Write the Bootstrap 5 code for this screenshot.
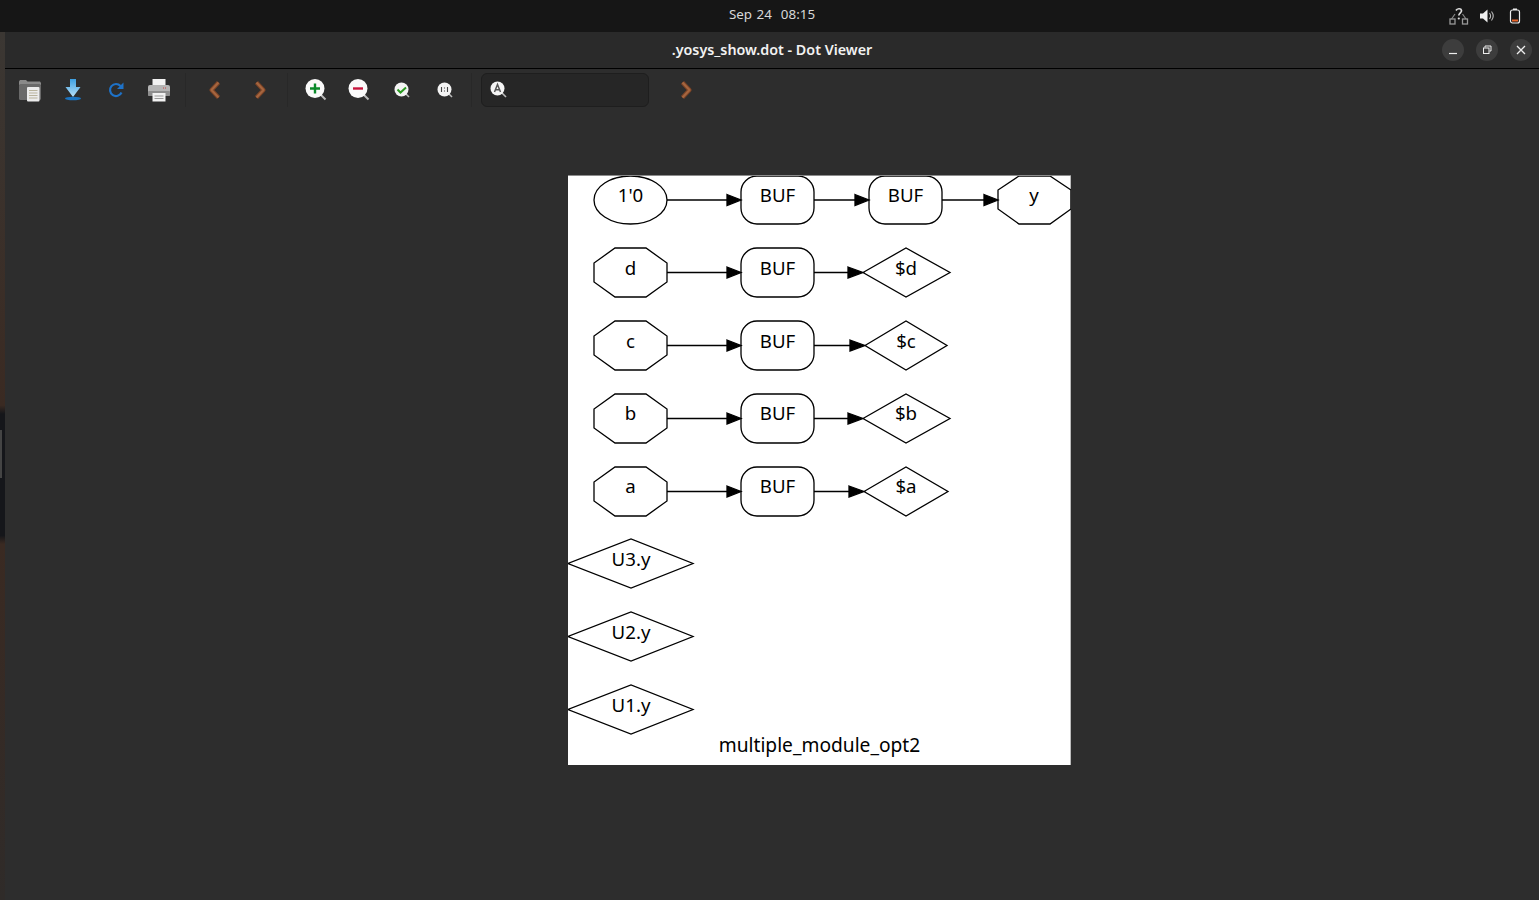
<!DOCTYPE html>
<html lang="en">

<head>
    <meta charset="UTF-8">
    <meta name="viewport" content="width=device-width, initial-scale=1.0">
    <title>.yosys_show.dot - Dot Viewer</title>
    <link href="https://cdn.jsdelivr.net/npm/bootstrap@5.3.0/dist/css/bootstrap.min.css" rel="stylesheet">
    <style>
        html, body {
            height: 100%;
            overflow: hidden;
        }

        body {
            background: #2d2d2d;
            font-family: "Noto Sans", sans-serif;
        }

        .top-strip {
            height: 32px;
            background: #161616;
            color: #d8d8d8;
            font-size: 13.4px;
        }

        .clock {
            margin-left: 5px;
            margin-top: -3px;
            word-spacing: 1px;
        }

        .tray {
            right: 18px;
            top: 0;
            height: 32px;
        }

        .tray-net {
            margin-right: 10px;
        }

        .tray-vol {
            margin-right: 14px;
        }

        .desk-edge {
            width: 5px;
            background:
                linear-gradient(#444, #444) 0 398px / 2px 48px no-repeat,
                linear-gradient(#3b3733 0, #3a2a22 43%, #15161a 44%, #15161a 58%, #3a2a22 59%, #2f2b29 100%);
        }

        .title-strip {
            height: 37px;
            background: #2a2a2a;
            border-bottom: 1px solid #000;
            color: #f2f2f2;
            font-size: 14.3px;
            font-weight: 600;
        }

        .win-btns {
            right: 7px;
            top: 7px;
            gap: 12px;
        }

        .win-btn {
            width: 22px;
            height: 22px;
            border-radius: 50%;
            background: #3d3d3d;
        }

        .tools {
            height: 41px;
            padding-left: 3px;
        }

        .tool {
            width: 43px;
            height: 41px;
        }

        .tool-wide {
            width: 45px;
        }

        .tool-sep {
            width: 1px;
            height: 34px;
            margin: 0 6px 0 5px;
            background: #282828;
        }

        .tool-sep-last {
            margin-right: 8px;
        }

        .finder {
            width: 168px;
            height: 34px;
            background: #262626;
            border: 1px solid #1e1e1e;
            border-radius: 6px;
            padding-left: 8px;
            margin-left: 1px;
        }

        .finder-next {
            margin-left: 15px;
        }

        .canvas-area {
            padding-top: 66px;
            padding-left: 563px;
        }

        .graph {
            display: block;
            background: #fff;
            box-shadow: inset -1px 0 0 #bbb, 0 -1px 0 #8c8c8c;
            font-family: "Noto Sans", sans-serif;
            font-size: 18.67px;
        }

        .graph text {
            text-anchor: middle;
            fill: #000;
        }

        .graph .graph-label {
            font-size: 19.2px;
        }

        .graph polygon {
            stroke: #000;
            stroke-width: 1.3;
        }

        .graph .node {
            fill: none;
            stroke: #000;
            stroke-width: 1.3;
        }

        .graph .edge {
            stroke: #000;
            stroke-width: 1.3;
        }
    </style>
</head>

<body class="d-flex flex-column">
    <div class="top-strip position-relative d-flex align-items-center justify-content-center flex-shrink-0">
        <span class="clock">Sep 24&nbsp; 08:15</span>
        <div class="tray position-absolute d-flex align-items-center">
            <svg width="20" height="18" viewBox="0 0 20 18" class="tray-net">
                <path d="M7 3.500c1-2 5-2.600 5.500 0 .4 2-2.700 2.500-2.700 5" fill="none" stroke="#ddd" stroke-width="1.700"/>
                <circle cx="9.800" cy="11.500" r="1.100" fill="#ddd"/>
                <path d="M6 7 2.500 12M13.500 7 17 12" stroke="#888" stroke-width="1.200"/>
                <rect x="1" y="12" width="5" height="5" fill="none" stroke="#999" stroke-width="1.300"/>
                <rect x="13.500" y="12" width="5" height="5" fill="none" stroke="#999" stroke-width="1.300"/>
            </svg>
            <svg width="16" height="16" viewBox="0 0 16 16" class="tray-vol">
                <path d="M1 5.500h3L8.500 1.500v13L4 10.500H1z" fill="#eee"/>
                <path d="M10.500 5c1.300 1.800 1.300 4.200 0 6M12.500 3.500c2 2.600 2 6.400 0 9" fill="none" stroke="#bbb" stroke-width="1.100"/>
            </svg>
            <svg width="12" height="16" viewBox="0 0 12 16">
                <rect x="1.500" y="2" width="9" height="13" rx="2" fill="none" stroke="#eee" stroke-width="1.200"/>
                <rect x="4" y=".5" width="4" height="1.500" fill="#eee"/>
                <rect x="3" y="11.500" width="6" height="2" fill="#e8642a"/>
            </svg>
        </div>
    </div>

    <div class="d-flex flex-grow-1">
        <div class="desk-edge flex-shrink-0"></div>

        <div class="flex-grow-1 d-flex flex-column">
            <div class="title-strip position-relative d-flex align-items-center justify-content-center flex-shrink-0">
                <span>.yosys_show.dot - Dot Viewer</span>
                <div class="win-btns position-absolute d-flex">
                    <div class="win-btn d-flex align-items-center justify-content-center">
                        <svg width="10" height="10" viewBox="0 0 10 10"><path d="M1 8.500h8" stroke="#eee" stroke-width="1.200"/></svg>
                    </div>
                    <div class="win-btn d-flex align-items-center justify-content-center">
                        <svg width="10" height="10" viewBox="0 0 10 10"><path d="M3 2.500V1h6v5H7.500" fill="none" stroke="#eee"/><rect x="1.500" y="3" width="5.500" height="5.500" fill="none" stroke="#eee"/></svg>
                    </div>
                    <div class="win-btn d-flex align-items-center justify-content-center">
                        <svg width="10" height="10" viewBox="0 0 10 10"><path d="M1 1l8 8M9 1l-8 8" stroke="#eee" stroke-width="1.300"/></svg>
                    </div>
                </div>
            </div>

            <div class="tools d-flex align-items-center flex-shrink-0">
                <!-- open -->
                <div class="tool d-flex align-items-center justify-content-center">
                    <svg width="24" height="24" viewBox="0 0 24 24">
                        <path d="M1 3.500 2 2h6l1.500 1.500H22l1 1.500v2H1z" fill="#8a8a8a"/>
                        <rect x="1" y="6" width="22" height="16" rx="1.500" fill="#6a6a6a"/>
                        <rect x="9" y="9" width="12.500" height="14.500" rx="1" fill="#ececec"/>
                        <path d="M11 12.500h8.500M11 15h8.500M11 17.500h8.500M11 20h8.500" stroke="#b9b39c"/>
                    </svg>
                </div>
                <!-- save -->
                <div class="tool d-flex align-items-center justify-content-center">
                    <svg width="18" height="24" viewBox="0 0 18 24">
                        <defs>
                            <linearGradient id="saveFill" x1="0" y1="0" x2="0" y2="1">
                                <stop offset="0" stop-color="#3d9fe0"/>
                                <stop offset="1" stop-color="#b8e0f8"/>
                            </linearGradient>
                        </defs>
                        <path d="M6 1h6v8h4.500L9 19 1.500 9H6z" fill="url(#saveFill)"/>
                        <ellipse cx="9" cy="20.500" rx="8" ry="1.700" fill="#1c74c0"/>
                    </svg>
                </div>
                <!-- reload -->
                <div class="tool d-flex align-items-center justify-content-center">
                    <svg width="18" height="18" viewBox="0 0 18 18">
                        <path d="M13.500 5A6 6 0 1 0 14.500 11.500" fill="none" stroke="#1e72c8" stroke-width="2.200"/>
                        <path d="M16.500 1.500v6.500h-6.500z" fill="#1e72c8"/>
                    </svg>
                </div>
                <!-- print -->
                <div class="tool d-flex align-items-center justify-content-center">
                    <svg width="24" height="24" viewBox="0 0 24 24">
                        <rect x="5.500" y="1" width="13" height="8" fill="#f2f2f2"/>
                        <rect x="1" y="7" width="22" height="11" rx="2" fill="#b5b5b5"/>
                        <rect x="1" y="13" width="22" height="5" rx="1" fill="#8e8e8e"/>
                        <rect x="5.500" y="15" width="13" height="8.500" fill="#f2f2f2"/>
                        <path d="M7.500 18h9M7.500 20.500h9" stroke="#9a9a9a"/>
                        <path d="M16 10h1M18 10h1" stroke="#c44"/>
                    </svg>
                </div>
                <div class="tool-sep"></div>
                <!-- back / forward -->
                <div class="tool tool-wide d-flex align-items-center justify-content-center">
                    <svg width="14" height="20" viewBox="0 0 14 20"><path d="M10.500 2.500 3.500 10l7 7.500" fill="none" stroke="#7a4326" stroke-width="4.200" stroke-linejoin="round"/><path d="M10.500 2.500 3.500 10l7 7.500" fill="none" stroke="#a5653f" stroke-width="2.200" stroke-linejoin="round"/></svg>
                </div>
                <div class="tool tool-wide d-flex align-items-center justify-content-center">
                    <svg width="14" height="20" viewBox="0 0 14 20"><path d="M3.500 2.500l7 7.500-7 7.500" fill="none" stroke="#7a4326" stroke-width="4.200" stroke-linejoin="round"/><path d="M3.500 2.500l7 7.500-7 7.500" fill="none" stroke="#a5653f" stroke-width="2.200" stroke-linejoin="round"/></svg>
                </div>
                <div class="tool-sep"></div>
                <!-- zoom in -->
                <div class="tool d-flex align-items-center justify-content-center">
                    <svg width="22" height="22" viewBox="0 0 22 22">
                        <path d="M15 15l5.500 5.500" stroke="#bbb" stroke-width="2"/>
                        <circle cx="10" cy="9.500" r="9.500" fill="#fafafa"/>
                        <path d="M10 4.500v10M5 9.500h10" stroke="#0a8a2a" stroke-width="2.400"/>
                    </svg>
                </div>
                <!-- zoom out -->
                <div class="tool d-flex align-items-center justify-content-center">
                    <svg width="22" height="22" viewBox="0 0 22 22">
                        <path d="M15 15l5.500 5.500" stroke="#bbb" stroke-width="2"/>
                        <circle cx="10" cy="9.500" r="9.500" fill="#fafafa"/>
                        <path d="M5 9.500h10" stroke="#c8143c" stroke-width="2.400"/>
                    </svg>
                </div>
                <!-- zoom fit -->
                <div class="tool d-flex align-items-center justify-content-center">
                    <svg width="16" height="16" viewBox="0 0 16 16">
                        <path d="M11 11l4 4" stroke="#bbb" stroke-width="1.600"/>
                        <circle cx="7.500" cy="7.500" r="7" fill="#f4f4f4"/>
                        <path d="M3.500 7.500l3 3 5.500-5" fill="none" stroke="#2a9a20" stroke-width="2"/>
                    </svg>
                </div>
                <!-- zoom 1:1 -->
                <div class="tool d-flex align-items-center justify-content-center">
                    <svg width="16" height="16" viewBox="0 0 16 16">
                        <path d="M11 11l4 4" stroke="#bbb" stroke-width="1.600"/>
                        <circle cx="7.500" cy="7.500" r="7" fill="#f4f4f4"/>
                        <path d="M4.500 5v5M10.500 5v5M7.500 5.500v1M7.500 8.500v1" stroke="#444" stroke-width="1.100"/>
                    </svg>
                </div>
                <div class="tool-sep tool-sep-last"></div>
                <!-- find -->
                <div class="finder d-flex align-items-center">
                    <svg width="17" height="17" viewBox="0 0 17 17">
                        <path d="M11.500 11.500l4.500 4.500" stroke="#bbb" stroke-width="1.600"/>
                        <circle cx="7.500" cy="7.500" r="7" fill="#f4f4f4"/>
                        <path d="M4.500 11 7.500 3.500 10.500 11M5.500 8.800h4" fill="none" stroke="#555" stroke-width="1.500"/>
                    </svg>
                </div>
                <div class="tool finder-next d-flex align-items-center justify-content-center">
                    <svg width="14" height="20" viewBox="0 0 14 20"><path d="M3.500 2.500l7 7.500-7 7.500" fill="none" stroke="#7a4326" stroke-width="4.200" stroke-linejoin="round"/><path d="M3.500 2.500l7 7.500-7 7.500" fill="none" stroke="#a5653f" stroke-width="2.200" stroke-linejoin="round"/></svg>
                </div>
            </div>

            <div class="canvas-area flex-grow-1">
                <svg class="graph" width="503" height="589" viewBox="0 0 503 589">
                    <!-- row 1 -->
                    <g>
                        <ellipse class="node" cx="62.500" cy="24" rx="36.500" ry="24"/>
                        <text x="62.500" y="26">1'0</text>
                        <line class="edge" x1="99" y1="24" x2="160" y2="24"/>
                        <polygon points="159,18.500 173,24 159,29.500"/>
                        <rect class="node" x="173" y="0" width="73" height="48" rx="16"/>
                        <text x="209.500" y="26">BUF</text>
                        <line class="edge" x1="246" y1="24" x2="288" y2="24"/>
                        <polygon points="287,18.500 301,24 287,29.500"/>
                        <rect class="node" x="301" y="0" width="73" height="48" rx="16"/>
                        <text x="337.500" y="26">BUF</text>
                        <line class="edge" x1="374" y1="24" x2="417" y2="24"/>
                        <polygon points="416,18.500 430,24 416,29.500"/>
                        <polygon class="node" points="451,0 482,0 503,14 503,33 482,48 451,48 430,33 430,14"/>
                        <text x="466" y="26">y</text>
                    </g>

                    <!-- row 2 -->
                    <g transform="translate(0 72)">
                        <polygon class="node" points="47,0 78,0 99,15 99,34 78,49 47,49 26,34 26,15"/>
                        <text x="62.500" y="27">d</text>
                        <line class="edge" x1="99" y1="24.500" x2="160" y2="24.500"/>
                        <polygon points="159,19 173,24.500 159,30"/>
                        <rect class="node" x="173" y="0" width="73" height="49" rx="16"/>
                        <text x="209.500" y="27">BUF</text>
                        <line class="edge" x1="246" y1="24.500" x2="281" y2="24.500"/>
                        <polygon points="280,19 295,24.500 280,30"/>
                        <polygon class="node" points="295,24.500 338,0 382,24.500 338,49"/>
                        <text x="338" y="27">$d</text>
                    </g>

                    <!-- row 3 -->
                    <g transform="translate(0 145)">
                        <polygon class="node" points="47,0 78,0 99,15 99,34 78,49 47,49 26,34 26,15"/>
                        <text x="62.500" y="27">c</text>
                        <line class="edge" x1="99" y1="24.500" x2="160" y2="24.500"/>
                        <polygon points="159,19 173,24.500 159,30"/>
                        <rect class="node" x="173" y="0" width="73" height="49" rx="16"/>
                        <text x="209.500" y="27">BUF</text>
                        <line class="edge" x1="246" y1="24.500" x2="283" y2="24.500"/>
                        <polygon points="282,19 297,24.500 282,30"/>
                        <polygon class="node" points="297,24.500 338,0 379,24.500 338,49"/>
                        <text x="338" y="27">$c</text>
                    </g>

                    <!-- row 4 -->
                    <g transform="translate(0 218)">
                        <polygon class="node" points="47,0 78,0 99,15 99,34 78,49 47,49 26,34 26,15"/>
                        <text x="62.500" y="26">b</text>
                        <line class="edge" x1="99" y1="24.500" x2="160" y2="24.500"/>
                        <polygon points="159,19 173,24.500 159,30"/>
                        <rect class="node" x="173" y="0" width="73" height="49" rx="16"/>
                        <text x="209.500" y="26">BUF</text>
                        <line class="edge" x1="246" y1="24.500" x2="281" y2="24.500"/>
                        <polygon points="280,19 295,24.500 280,30"/>
                        <polygon class="node" points="295,24.500 338,0 382,24.500 338,49"/>
                        <text x="338" y="26">$b</text>
                    </g>

                    <!-- row 5 -->
                    <g transform="translate(0 291)">
                        <polygon class="node" points="47,0 78,0 99,15 99,34 78,49 47,49 26,34 26,15"/>
                        <text x="62.500" y="26">a</text>
                        <line class="edge" x1="99" y1="24.500" x2="160" y2="24.500"/>
                        <polygon points="159,19 173,24.500 159,30"/>
                        <rect class="node" x="173" y="0" width="73" height="49" rx="16"/>
                        <text x="209.500" y="26">BUF</text>
                        <line class="edge" x1="246" y1="24.500" x2="282" y2="24.500"/>
                        <polygon points="281,19 296,24.500 281,30"/>
                        <polygon class="node" points="296,24.500 338,0 380,24.500 338,49"/>
                        <text x="338" y="26">$a</text>
                    </g>

                    <!-- unconnected wires -->
                    <g transform="translate(0 363)">
                        <polygon class="node" points="0,24.500 63,0 125,24.500 63,49"/>
                        <text x="63" y="27">U3.y</text>
                    </g>
                    <g transform="translate(0 436)">
                        <polygon class="node" points="0,24.500 63,0 125,24.500 63,49"/>
                        <text x="63" y="27">U2.y</text>
                    </g>
                    <g transform="translate(0 509)">
                        <polygon class="node" points="0,24.500 63,0 125,24.500 63,49"/>
                        <text x="63" y="27">U1.y</text>
                    </g>

                    <text class="graph-label" x="251.500" y="576">multiple_module_opt2</text>
                </svg>
            </div>
        </div>
    </div>

    <script src="https://cdn.jsdelivr.net/npm/bootstrap@5.3.0/dist/js/bootstrap.bundle.min.js"></script>
</body>

</html>
